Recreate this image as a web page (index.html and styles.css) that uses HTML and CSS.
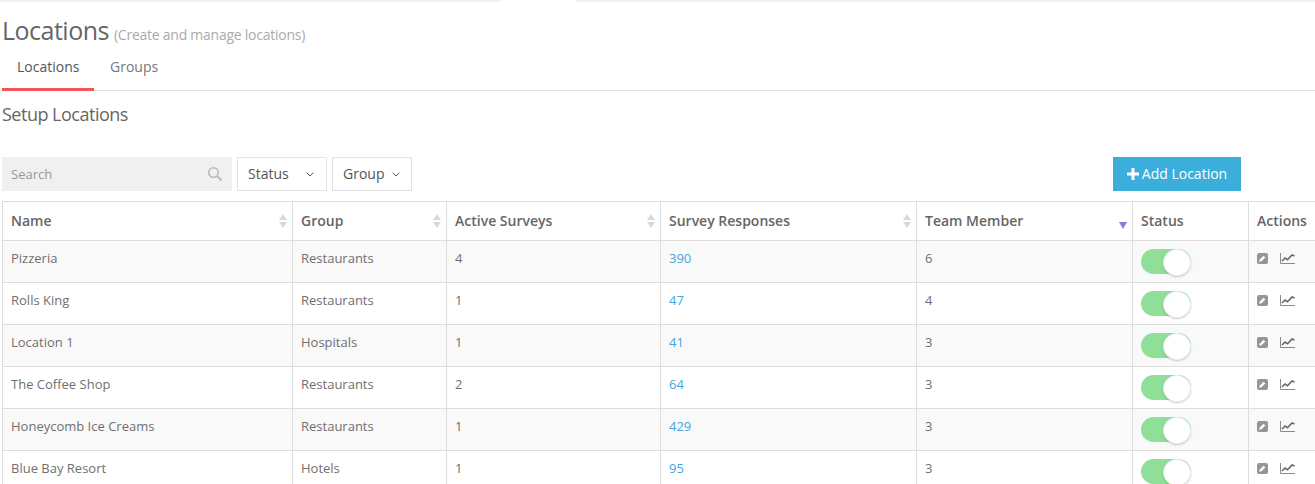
FILE: index.html
```html
<!DOCTYPE html>
<html lang="en">
<head>
    <meta charset="UTF-8">
    <title>Locations</title>
    <link rel="stylesheet" href="styles.css">
</head>
<body>
    <svg class="defs" width="0" height="0">
        <symbol id="edit" viewBox="0 0 11 11">
            <rect width="11" height="11" rx="2" fill="#959595"/>
            <path d="M2.2 8.8l.6-2.3 3.8-3.8 1.7 1.7-3.8 3.8z" fill="#fff"/>
        </symbol>
        <symbol id="chart" viewBox="0 0 15 11">
            <path d="M.5 0v10.5H15" fill="none" stroke="#8a8a8a" stroke-width="1"/>
            <path d="M2 8l3-3 2.5 1.8L12 2l2.5 1" fill="none" stroke="#666" stroke-width="1.6"/>
        </symbol>
    </svg>

    <div class="top-strip"><span></span><i></i><span></span></div>

    <div class="page">
        <div class="title-row">
            <h1>Locations</h1>
            <small>(Create and manage locations)</small>
        </div>

        <div class="tabs">
            <a class="tab active">Locations</a>
            <a class="tab">Groups</a>
        </div>

        <h2>Setup Locations</h2>

        <div class="toolbar">
            <div class="search">
                <span>Search</span>
                <svg width="16" height="16" viewBox="0 0 16 16"><circle cx="6.5" cy="6.5" r="4.7" fill="none" stroke="#bbb" stroke-width="1.6"/><path d="M10 10l4.5 4.5" stroke="#bbb" stroke-width="2.2"/></svg>
            </div>
            <div class="select status-select"><span>Status</span> <svg class="chev" width="8" height="5" viewBox="0 0 8 5"><path d="M.7.7L4 4 7.3.7" fill="none" stroke="#555" stroke-width="1"/></svg></div>
            <div class="select group-select"><span>Group</span> <svg class="chev" width="8" height="5" viewBox="0 0 8 5"><path d="M.7.7L4 4 7.3.7" fill="none" stroke="#555" stroke-width="1"/></svg></div>
            <button class="add-btn"><svg width="12" height="12" viewBox="0 0 12 12"><path d="M6 0v12M0 6h12" stroke="#fff" stroke-width="3"/></svg><span>Add Location</span></button>
        </div>

        <table class="locations">
            <colgroup>
                <col class="c-name"><col class="c-group"><col class="c-active"><col class="c-resp"><col class="c-team"><col class="c-status"><col class="c-actions">
            </colgroup>
            <thead>
                <tr>
                    <th class="sortable">Name</th>
                    <th class="sortable">Group</th>
                    <th class="sortable">Active Surveys</th>
                    <th class="sortable">Survey Responses</th>
                    <th class="sorted">Team Member</th>
                    <th>Status</th>
                    <th>Actions</th>
                </tr>
            </thead>
            <tbody>
                <tr><td>Pizzeria</td><td>Restaurants</td><td>4</td><td><a>390</a></td><td>6</td><td><span class="toggle"></span></td><td class="acts"><svg class="ic-edit"><use href="#edit"/></svg><svg class="ic-chart"><use href="#chart"/></svg></td></tr>
                <tr><td>Rolls King</td><td>Restaurants</td><td>1</td><td><a>47</a></td><td>4</td><td><span class="toggle"></span></td><td class="acts"><svg class="ic-edit"><use href="#edit"/></svg><svg class="ic-chart"><use href="#chart"/></svg></td></tr>
                <tr><td>Location 1</td><td>Hospitals</td><td>1</td><td><a>41</a></td><td>3</td><td><span class="toggle"></span></td><td class="acts"><svg class="ic-edit"><use href="#edit"/></svg><svg class="ic-chart"><use href="#chart"/></svg></td></tr>
                <tr><td>The Coffee Shop</td><td>Restaurants</td><td>2</td><td><a>64</a></td><td>3</td><td><span class="toggle"></span></td><td class="acts"><svg class="ic-edit"><use href="#edit"/></svg><svg class="ic-chart"><use href="#chart"/></svg></td></tr>
                <tr><td>Honeycomb Ice Creams</td><td>Restaurants</td><td>1</td><td><a>429</a></td><td>3</td><td><span class="toggle"></span></td><td class="acts"><svg class="ic-edit"><use href="#edit"/></svg><svg class="ic-chart"><use href="#chart"/></svg></td></tr>
                <tr><td>Blue Bay Resort</td><td>Hotels</td><td>1</td><td><a>95</a></td><td>3</td><td><span class="toggle"></span></td><td class="acts"><svg class="ic-edit"><use href="#edit"/></svg><svg class="ic-chart"><use href="#chart"/></svg></td></tr>
            </tbody>
        </table>
    </div>
</body>
</html>
```

FILE: styles.css
```css
* {
    margin: 0;
    padding: 0;
    box-sizing: border-box;
}

html, body {
    height: 484px;
    overflow: hidden;
}

body {
    font-family: "Open Sans", sans-serif;
    font-size: 13px;
    color: #666;
    background: #fff;
}

.defs {
    display: block;
    height: 0;
}

.top-strip {
    display: flex;
    height: 2px;
}

.top-strip span {
    flex: 1;
    background: #f0f0f0;
}

.top-strip span:first-child {
    flex: 0 0 500px;
}

.top-strip i {
    flex: 0 0 76px;
}

.page {
    padding-left: 2px;
    height: 482px;
    overflow: hidden;
}

.title-row {
    display: flex;
    align-items: baseline;
    height: 46px;
    padding-top: 11px;
}

h1 {
    font-size: 25px;
    font-weight: 400;
    line-height: 34px;
    letter-spacing: -0.5px;
    color: #666;
}

.title-row small {
    font-size: 14px;
    letter-spacing: -0.25px;
    color: #aaa;
    margin-left: 5px;
}

.tabs {
    display: flex;
    height: 43px;
    border-bottom: 1px solid #e0e0e0;
}

.tab {
    height: 43px;
    padding: 9px 15px 0 16px;
    font-size: 14px;
    line-height: 20px;
    color: #777;
}

.tab.active {
    color: #555;
    width: 92px;
    padding-left: 15px;
    border-bottom: 3px solid #f4545c;
}

h2 {
    font-size: 18px;
    font-weight: 400;
    line-height: 24px;
    letter-spacing: -0.5px;
    color: #666;
    margin-top: 11px;
}

.toolbar {
    display: flex;
    align-items: stretch;
    width: 1239px;
    height: 34px;
    margin-top: 31px;
    gap: 5px;
}

.search {
    flex: 0 0 230px;
    display: flex;
    align-items: center;
    justify-content: space-between;
    padding: 0 9px;
    background: #f0f0f0;
    color: #999;
}

.select {
    display: flex;
    align-items: center;
    justify-content: space-between;
    padding: 0 11px 0 10px;
    border: 1px solid #e2e2e2;
    font-size: 14px;
    color: #555;
}

.select span,
.add-btn span {
    margin-top: -2px;
}

.status-select {
    flex: 0 0 90px;
    padding-right: 12px;
}

.group-select {
    flex: 0 0 80px;
}

.add-btn {
    margin-left: auto;
    width: 128px;
    display: flex;
    align-items: center;
    justify-content: center;
    gap: 3px;
    border: none;
    background: #3baedb;
    color: #fff;
    font-family: inherit;
    font-size: 14px;
}

.locations {
    border-collapse: collapse;
    table-layout: fixed;
    width: 1376px;
    margin-top: 10px;
}

.c-name { width: 290px; }
.c-group { width: 154px; }
.c-active { width: 214px; }
.c-resp { width: 256px; }
.c-team { width: 216px; }
.c-status { width: 116px; }
.c-actions { width: 130px; }

.locations th,
.locations td {
    border: 1px solid #ddd;
    padding: 0 8px;
    text-align: left;
    vertical-align: top;
}

.locations th {
    height: 39px;
    padding-top: 9px;
    font-size: 14px;
    line-height: 20px;
    font-weight: 600;
    color: #666;
    position: relative;
}

.locations td {
    height: 42px;
    padding-top: 8px;
    line-height: 18px;
    color: #707070;
}

.locations tbody tr:nth-child(odd) td {
    background: #f9f9f9;
}

.locations a {
    color: #45a5e0;
}

/* sort arrows sit over the header cell */
.sortable::after {
    content: "";
    position: absolute;
    right: 5px;
    top: 12px;
    width: 0;
    height: 0;
    border-left: 4px solid transparent;
    border-right: 4px solid transparent;
    border-bottom: 6px solid #d8d8d8;
}

.sortable::before {
    content: "";
    position: absolute;
    right: 5px;
    top: 20px;
    width: 0;
    height: 0;
    border-left: 4px solid transparent;
    border-right: 4px solid transparent;
    border-top: 6px solid #d8d8d8;
}

.sorted::after {
    content: "";
    position: absolute;
    right: 5px;
    top: 20px;
    width: 0;
    height: 0;
    border-left: 4px solid transparent;
    border-right: 4px solid transparent;
    border-top: 7px solid #7a80dc;
}

.toggle {
    display: block;
    position: relative;
    width: 50px;
    height: 25px;
    border-radius: 13px;
    background: #8fdf98;
}

.toggle::after {
    content: "";
    position: absolute;
    right: 0;
    top: 0;
    width: 26px;
    height: 25px;
    border-radius: 50%;
    background: #fff;
    border: 1px solid #e8f0e8;
    box-shadow: 0 1px 2px rgba(0,0,0,0.2);
}

.acts {
    white-space: nowrap;
}

.acts svg {
    display: inline-block;
    vertical-align: top;
}

.ic-edit {
    width: 11px;
    height: 11px;
    margin-top: 4px;
}

.ic-chart {
    width: 15px;
    height: 11px;
    margin: 4px 0 0 12px;
}
```
